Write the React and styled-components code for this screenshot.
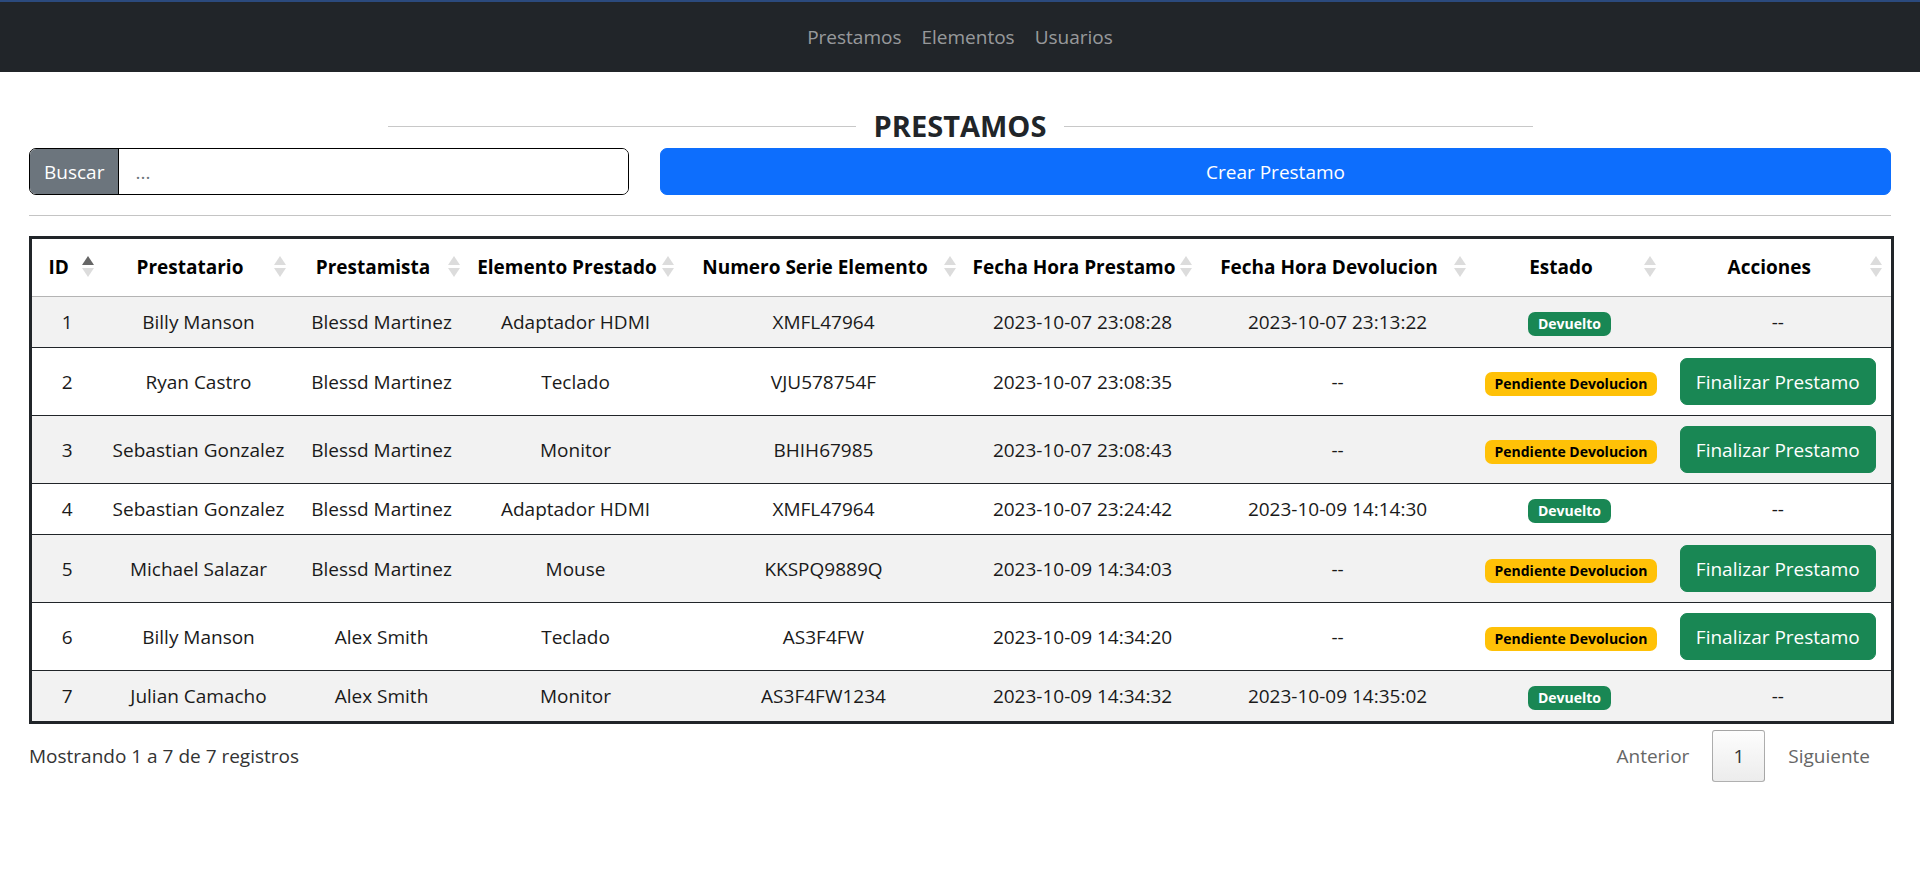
import styled, { createGlobalStyle } from 'styled-components';

const FONT = '"Open Sans", "Noto Sans", "Liberation Sans", sans-serif';

const GlobalStyle = createGlobalStyle`
    body {
        margin: 0;
        font-family: ${FONT};
        font-size: 19px;
        line-height: 30px;
        color: #212529;
        background: #fff;
    }
`;

const Navbar = styled.nav`
    height: 70px;
    border-top: 2px solid #2b4a7d;
    background: #212529;
    display: flex;
    justify-content: center;
    align-items: center;
`;

const NavLink = styled.a`
    padding: 0 10px;
    color: rgba(255, 255, 255, 0.55);
    font-size: 19px;
    text-decoration: none;
    cursor: pointer;
`;

const Main = styled.main`
    padding: 36px 29px 40px;
`;

const TitleRow = styled.div`
    width: 1145px;
    margin: 0 auto;
    display: flex;
    align-items: center;
    gap: 18px;
`;

const TitleLine = styled.span`
    flex: 1;
    height: 1px;
    background: #c8c8c8;
`;

const Title = styled.h4`
    margin: 0;
    font-size: 29px;
    line-height: 36px;
    font-weight: 700;
    color: #212529;
`;

const Controls = styled.div`
    margin-top: 4px;
    display: grid;
    grid-template-columns: 600px 1fr;
    gap: 31px;
`;

const InputGroup = styled.div`
    display: flex;
    height: 47px;
    box-sizing: border-box;
    border: 1px solid #000;
    border-radius: 7px;
    overflow: hidden;
`;

const Addon = styled.span`
    display: flex;
    align-items: center;
    padding: 0 14px;
    background: #6c757d;
    color: #fff;
    border-right: 1px solid #000;
`;

const SearchInput = styled.input`
    flex: 1;
    border: none;
    outline: none;
    padding: 0 16px;
    font-family: ${FONT};
    font-size: 19px;
    color: #212529;

    &::placeholder {
        color: #6c757d;
    }
`;

const Button = styled.button`
    height: 47px;
    border: 1px solid ${(p) => p.$bg};
    border-radius: 7px;
    background: ${(p) => p.$bg};
    color: #fff;
    font-family: ${FONT};
    font-size: 19px;
    padding: 0 15px;
    cursor: pointer;
`;

const Divider = styled.hr`
    margin: 20px 0;
    border: none;
    border-top: 1px solid #c4c4c4;
`;

const Table = styled.table`
    width: 100%;
    border-collapse: collapse;
    border: 3px solid #212529;
    table-layout: fixed;
`;

const Th = styled.th`
    padding: 13px 8px 14px;
    font-weight: 700;
    color: #000;
    border-bottom: 1px solid #b4b4b4;
    white-space: nowrap;
`;

const ThInner = styled.div`
    display: flex;
    align-items: center;
    gap: 3px;

    svg {
        flex-shrink: 0;
    }
`;

const ThLabel = styled.span`
    flex: 1;
    text-align: center;
`;

const Row = styled.tr`
    background: ${(p) => (p.$odd ? '#f2f2f2' : '#fff')};
    border-top: 1px solid #212529;

    &:first-child {
        border-top: none;
    }
`;

const Td = styled.td`
    padding: 10px;
    text-align: center;
    vertical-align: middle;
    white-space: nowrap;
    color: #1a1a1a;
`;

const Badge = styled.span`
    display: inline-block;
    padding: 0 10px;
    height: 24px;
    line-height: 24px;
    border-radius: 7px;
    font-size: 14px;
    font-weight: 700;
    background: ${(p) => (p.$done ? '#198754' : '#ffc107')};
    color: ${(p) => (p.$done ? '#fff' : '#000')};
`;

const Footer = styled.div`
    margin-top: 6px;
    display: flex;
    justify-content: space-between;
    align-items: center;
`;

const Info = styled.div`
    color: #333;
`;

const Pager = styled.div`
    display: flex;
    align-items: center;
    gap: 2px;
`;

const PageButton = styled.span`
    box-sizing: border-box;
    height: 52px;
    display: flex;
    align-items: center;
    padding: 0 20px;
    border-radius: 3px;
    color: ${(p) => (p.$current ? '#333' : '#666')};
    border: 1px solid ${(p) => (p.$current ? 'rgba(0,0,0,0.3)' : 'transparent')};
    background: ${(p) =>
        p.$current ? 'linear-gradient(to bottom, #fdfdfd 0%, #ececec 100%)' : 'transparent'};
`;

function SortIcon({ active }) {
    return (
        <svg width="14" height="22" viewBox="0 0 14 22">
            <polygon points="7,0 13,9 1,9" fill={active ? '#666' : '#dcdcdc'} />
            <polygon points="1,12 13,12 7,21" fill="#dcdcdc" />
        </svg>
    );
}

const columns = [
    { label: 'ID', width: 72 },
    { label: 'Prestatario', width: 192 },
    { label: 'Prestamista', width: 174 },
    { label: 'Elemento Prestado', width: 214 },
    { label: 'Numero Serie Elemento', width: 282 },
    { label: 'Fecha Hora Prestamo', width: 236 },
    { label: 'Fecha Hora Devolucion', width: 274 },
    { label: 'Estado', width: 190 },
    { label: 'Acciones', width: 228 },
];

const prestamos = [
    [1, 'Billy Manson', 'Blessd Martinez', 'Adaptador HDMI', 'XMFL47964', '2023-10-07 23:08:28', '2023-10-07 23:13:22'],
    [2, 'Ryan Castro', 'Blessd Martinez', 'Teclado', 'VJU578754F', '2023-10-07 23:08:35', null],
    [3, 'Sebastian Gonzalez', 'Blessd Martinez', 'Monitor', 'BHIH67985', '2023-10-07 23:08:43', null],
    [4, 'Sebastian Gonzalez', 'Blessd Martinez', 'Adaptador HDMI', 'XMFL47964', '2023-10-07 23:24:42', '2023-10-09 14:14:30'],
    [5, 'Michael Salazar', 'Blessd Martinez', 'Mouse', 'KKSPQ9889Q', '2023-10-09 14:34:03', null],
    [6, 'Billy Manson', 'Alex Smith', 'Teclado', 'AS3F4FW', '2023-10-09 14:34:20', null],
    [7, 'Julian Camacho', 'Alex Smith', 'Monitor', 'AS3F4FW1234', '2023-10-09 14:34:32', '2023-10-09 14:35:02'],
];

export default function App() {
    return (
        <>
            <GlobalStyle />
            <Navbar>
                <NavLink>Prestamos</NavLink>
                <NavLink>Elementos</NavLink>
                <NavLink>Usuarios</NavLink>
            </Navbar>
            <Main>
                <TitleRow>
                    <TitleLine />
                    <Title>PRESTAMOS</Title>
                    <TitleLine />
                </TitleRow>
                <Controls>
                    <InputGroup>
                        <Addon>Buscar</Addon>
                        <SearchInput placeholder="..." />
                    </InputGroup>
                    <Button $bg="#0d6efd">Crear Prestamo</Button>
                </Controls>
                <Divider />
                <Table>
                    <colgroup>
                        {columns.map((c) => (
                            <col key={c.label} style={{ width: c.width }} />
                        ))}
                    </colgroup>
                    <thead>
                        <tr>
                            {columns.map((c, i) => (
                                <Th key={c.label}>
                                    <ThInner>
                                        <ThLabel>{c.label}</ThLabel>
                                        <SortIcon active={i === 0} />
                                    </ThInner>
                                </Th>
                            ))}
                        </tr>
                    </thead>
                    <tbody>
                        {prestamos.map((p, i) => {
                            const devuelto = p[6] !== null;
                            return (
                                <Row key={p[0]} $odd={i % 2 === 0}>
                                    {p.slice(0, 6).map((v, j) => (
                                        <Td key={j}>{v}</Td>
                                    ))}
                                    <Td>{devuelto ? p[6] : '--'}</Td>
                                    <Td>
                                        <Badge $done={devuelto}>
                                            {devuelto ? 'Devuelto' : 'Pendiente Devolucion'}
                                        </Badge>
                                    </Td>
                                    <Td>
                                        {devuelto ? '--' : <Button $bg="#198754">Finalizar Prestamo</Button>}
                                    </Td>
                                </Row>
                            );
                        })}
                    </tbody>
                </Table>
                <Footer>
                    <Info>Mostrando 1 a 7 de 7 registros</Info>
                    <Pager>
                        <PageButton>Anterior</PageButton>
                        <PageButton $current>1</PageButton>
                        <PageButton>Siguiente</PageButton>
                    </Pager>
                </Footer>
            </Main>
        </>
    );
}
